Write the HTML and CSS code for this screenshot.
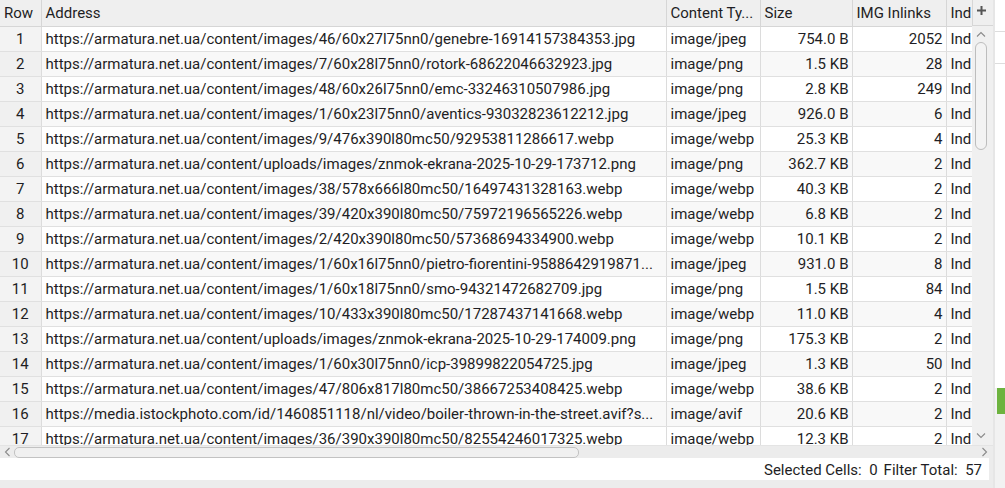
FILE: index.html
```html
<!DOCTYPE html>
<html>
<head>
<meta charset="utf-8">
<link rel="stylesheet" href="styles.css">
</head>
<body>
<div class="app">
  <div class="left">
    <div class="gridarea">
      <div class="tablewrap">
        <table class="grid">
          <colgroup>
            <col class="c-row"><col class="c-addr"><col class="c-type"><col class="c-size"><col class="c-img"><col class="c-ind">
          </colgroup>
          <thead>
            <tr><th>Row</th><th>Address</th><th>Content Ty...</th><th>Size</th><th>IMG Inlinks</th><th class="clip">Ind</th></tr>
          </thead>
          <tbody>
            <tr><td class="num">1</td><td>https://armatura.net.ua/content/images/46/60x27l75nn0/genebre-16914157384353.jpg</td><td>image/jpeg</td><td class="r">754.0 B</td><td class="r">2052</td><td class="clip">Ind</td></tr>
            <tr><td class="num">2</td><td>https://armatura.net.ua/content/images/7/60x28l75nn0/rotork-68622046632923.jpg</td><td>image/png</td><td class="r">1.5 KB</td><td class="r">28</td><td class="clip">Ind</td></tr>
            <tr><td class="num">3</td><td>https://armatura.net.ua/content/images/48/60x26l75nn0/emc-33246310507986.jpg</td><td>image/png</td><td class="r">2.8 KB</td><td class="r">249</td><td class="clip">Ind</td></tr>
            <tr><td class="num">4</td><td>https://armatura.net.ua/content/images/1/60x23l75nn0/aventics-93032823612212.jpg</td><td>image/jpeg</td><td class="r">926.0 B</td><td class="r">6</td><td class="clip">Ind</td></tr>
            <tr><td class="num">5</td><td>https://armatura.net.ua/content/images/9/476x390l80mc50/92953811286617.webp</td><td>image/webp</td><td class="r">25.3 KB</td><td class="r">4</td><td class="clip">Ind</td></tr>
            <tr><td class="num">6</td><td>https://armatura.net.ua/content/uploads/images/znmok-ekrana-2025-10-29-173712.png</td><td>image/png</td><td class="r">362.7 KB</td><td class="r">2</td><td class="clip">Ind</td></tr>
            <tr><td class="num">7</td><td>https://armatura.net.ua/content/images/38/578x666l80mc50/16497431328163.webp</td><td>image/webp</td><td class="r">40.3 KB</td><td class="r">2</td><td class="clip">Ind</td></tr>
            <tr><td class="num">8</td><td>https://armatura.net.ua/content/images/39/420x390l80mc50/75972196565226.webp</td><td>image/webp</td><td class="r">6.8 KB</td><td class="r">2</td><td class="clip">Ind</td></tr>
            <tr><td class="num">9</td><td>https://armatura.net.ua/content/images/2/420x390l80mc50/57368694334900.webp</td><td>image/webp</td><td class="r">10.1 KB</td><td class="r">2</td><td class="clip">Ind</td></tr>
            <tr><td class="num">10</td><td>https://armatura.net.ua/content/images/1/60x16l75nn0/pietro-fiorentini-9588642919871...</td><td>image/jpeg</td><td class="r">931.0 B</td><td class="r">8</td><td class="clip">Ind</td></tr>
            <tr><td class="num">11</td><td>https://armatura.net.ua/content/images/1/60x18l75nn0/smo-94321472682709.jpg</td><td>image/png</td><td class="r">1.5 KB</td><td class="r">84</td><td class="clip">Ind</td></tr>
            <tr><td class="num">12</td><td>https://armatura.net.ua/content/images/10/433x390l80mc50/17287437141668.webp</td><td>image/webp</td><td class="r">11.0 KB</td><td class="r">4</td><td class="clip">Ind</td></tr>
            <tr><td class="num">13</td><td>https://armatura.net.ua/content/uploads/images/znmok-ekrana-2025-10-29-174009.png</td><td>image/png</td><td class="r">175.3 KB</td><td class="r">2</td><td class="clip">Ind</td></tr>
            <tr><td class="num">14</td><td>https://armatura.net.ua/content/images/1/60x30l75nn0/icp-39899822054725.jpg</td><td>image/jpeg</td><td class="r">1.3 KB</td><td class="r">50</td><td class="clip">Ind</td></tr>
            <tr><td class="num">15</td><td>https://armatura.net.ua/content/images/47/806x817l80mc50/38667253408425.webp</td><td>image/webp</td><td class="r">38.6 KB</td><td class="r">2</td><td class="clip">Ind</td></tr>
            <tr><td class="num">16</td><td>https://media.istockphoto.com/id/1460851118/nl/video/boiler-thrown-in-the-street.avif?s...</td><td>image/avif</td><td class="r">20.6 KB</td><td class="r">2</td><td class="clip">Ind</td></tr>
            <tr><td class="num">17</td><td>https://armatura.net.ua/content/images/36/390x390l80mc50/82554246017325.webp</td><td>image/webp</td><td class="r">12.3 KB</td><td class="r">2</td><td class="clip">Ind</td></tr>
          </tbody>
        </table>
      </div>
      <div class="vscroll">
        <div class="plus">
          <svg width="9" height="9" viewBox="0 0 9 9"><path d="M3.5 0h2v3.5H9v2H5.5V9h-2V5.5H0v-2h3.5z" fill="#555"/></svg>
        </div>
        <div class="vtrack">
          <svg class="arrow" width="10" height="6" viewBox="0 0 10 6"><path d="M1 5.5L5 1.5L9 5.5" fill="none" stroke="#8a8a8a" stroke-width="1.1"/></svg>
          <div class="vthumb"></div>
          <div class="vspace"></div>
          <svg class="arrow" width="10" height="6" viewBox="0 0 10 6"><path d="M1 0.5L5 4.5L9 0.5" fill="none" stroke="#8a8a8a" stroke-width="1.1"/></svg>
        </div>
      </div>
    </div>
    <div class="hscroll">
      <svg class="harrow" width="6" height="10" viewBox="0 0 6 10"><path d="M5.5 1L1.5 5L5.5 9" fill="none" stroke="#8a8a8a" stroke-width="1.1"/></svg>
      <div class="hthumb"></div>
      <div class="hspace"></div>
      <svg class="harrow" width="6" height="10" viewBox="0 0 6 10"><path d="M0.5 1L4.5 5L0.5 9" fill="none" stroke="#8a8a8a" stroke-width="1.1"/></svg>
    </div>
    <div class="status">
      <span>Selected Cells:&nbsp; 0</span>
      <span>Filter Total:&nbsp; 57</span>
    </div>
  </div>
  <div class="side">
    <div class="sline"></div>
    <div class="sline"></div>
    <div class="sgap"></div>
    <div class="sgreen"></div>
  </div>
</div>
</body>
</html>
```

FILE: styles.css
```css
* { box-sizing: border-box; }
html, body { margin: 0; padding: 0; }
body {
  width: 1005px;
  height: 488px;
  overflow: hidden;
  background: #ececec;
  font-family: Roboto, "Liberation Sans", Arial, sans-serif;
  font-size: 15px;
  color: #1e1e24;
}
.app { display: flex; height: 488px; }
.left { width: 993px; display: flex; flex-direction: column; }
.gridarea { display: flex; height: 445px; background: #fff; }
.tablewrap { width: 972px; height: 445px; overflow: hidden; }
.grid {
  border-collapse: collapse;
  table-layout: fixed;
  width: 972px;
}
.c-row { width: 41px; }
.c-addr { width: 625px; }
.c-type { width: 94px; }
.c-size { width: 92px; }
.c-img { width: 94px; }
.c-ind { width: 26px; }
.grid th, .grid td {
  height: 25px;
  padding: 0 4px;
  white-space: nowrap;
  overflow: hidden;
  border-right: 1px solid #dcdcdc;
  border-bottom: 1px solid #e0e0e0;
  text-align: left;
  font-weight: normal;
  line-height: 24px;
}
.grid th {
  height: 26px;
  background: #efefef;
  border-bottom: 1px solid #d6d6d6;
  border-right: 1px solid #d6d6d6;
}
.grid td.num { text-align: center; background: #f3f3f3; padding: 0; }
.grid td.r { text-align: right; padding-right: 3px; }
.grid .clip { text-overflow: clip; border-right: none; padding-right: 0; }
.grid tbody tr:nth-child(even) td { background: #f8f8f8; }
.grid tbody tr:nth-child(even) td.num { background: #f0f0f0; }

.vscroll { width: 21px; display: flex; flex-direction: column; background: #f0f0f0; }
.plus {
  height: 26px;
  background: #efefef;
  border-bottom: 1px solid #d6d6d6;
  border-left: 1px solid #d6d6d6;
  display: flex;
  align-items: center;
  justify-content: center;
  padding-right: 4px;
  padding-bottom: 4px;
}
.vtrack { flex: 1; display: flex; flex-direction: column; align-items: center; padding: 5px 4px 6px 0; }
.vthumb {
  margin-top: 5px;
  width: 12px;
  height: 108px;
  border: 1px solid #bdbdbd;
  border-radius: 6px;
  background: #f3f3f3;
}
.vspace { flex: 1; }

.hscroll {
  height: 13px;
  background: #ececec;
  display: flex;
  align-items: center;
  padding: 0 5px 0 4px;
  border-top: 1px solid #e4e4e4;
}
.harrow { flex: none; }
.hthumb {
  margin-left: 4px;
  width: 565px;
  height: 11px;
  border: 1px solid #c2c2c2;
  border-radius: 5px;
  background: #f0f0f0;
}
.hspace { flex: 1; }

.status {
  height: 22px;
  background: #fff;
  display: flex;
  justify-content: flex-end;
  align-items: center;
  gap: 6px;
  padding-right: 7px;
  padding-top: 2px;
  margin-right: 4px;
}

.side {
  width: 12px;
  display: flex;
  flex-direction: column;
  background: #f2f2f2;
  border-left: 2px solid #e6e6e6;
}
.sline { height: 32px; border-bottom: 1px solid #dddddd; background: #fff; }
.sgap { height: 324px; background: #fff; }
.sgreen { margin-left: 2px; height: 26px; background: #6db33f; }
```
